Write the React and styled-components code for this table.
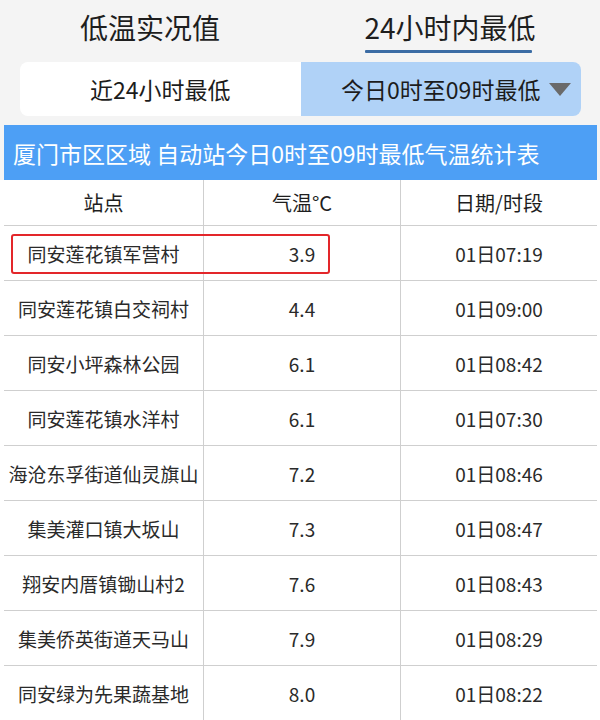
import React from "react";
import styled, { createGlobalStyle } from "styled-components";

const GlobalStyle = createGlobalStyle`
  html, body {
    margin: 0;
    padding: 0;
    background: #f4f4f4;
    font-family: "Noto Sans CJK SC", "Noto Sans", sans-serif;
    color: #222;
  }
`;

const rows = [
  { name: "同安莲花镇军营村", temp: "3.9", time: "01日07:19", marked: true },
  { name: "同安莲花镇白交祠村", temp: "4.4", time: "01日09:00" },
  { name: "同安小坪森林公园", temp: "6.1", time: "01日08:42" },
  { name: "同安莲花镇水洋村", temp: "6.1", time: "01日07:30" },
  { name: "海沧东孚街道仙灵旗山", temp: "7.2", time: "01日08:46" },
  { name: "集美灌口镇大坂山", temp: "7.3", time: "01日08:47" },
  { name: "翔安内厝镇锄山村2", temp: "7.6", time: "01日08:43" },
  { name: "集美侨英街道天马山", temp: "7.9", time: "01日08:29" },
  { name: "同安绿为先果蔬基地", temp: "8.0", time: "01日08:22" },
];

export default function App() {
  return (
    <Page>
      <GlobalStyle />
      <Tabs>
        <Tab>低温实况值</Tab>
        <Tab active>
          24小时内最低
          <Underline />
        </Tab>
      </Tabs>
      <Segment>
        <SegItem>近24小时最低</SegItem>
        <SegItem selected>
          今日0时至09时最低
          <Caret />
        </SegItem>
      </Segment>
      <TitleBar>厦门市区区域 自动站今日0时至09时最低气温统计表</TitleBar>
      <Table>
        <Row head>
          <Cell head>站点</Cell>
          <Cell head>气温°C</Cell>
          <Cell head>日期/时段</Cell>
        </Row>
        {rows.map((r) => (
          <Row key={r.name}>
            <Cell>{r.name}</Cell>
            <Cell>{r.temp}</Cell>
            <Cell>{r.time}</Cell>
            {r.marked && <Marker />}
          </Row>
        ))}
      </Table>
    </Page>
  );
}

const Page = styled.div`
  width: 600px;
  height: 720px;
  overflow: hidden;
  background: #f4f4f4;
`;

const Tabs = styled.div`
  display: grid;
  grid-template-columns: 1fr 1fr;
  height: 62px;
`;

const Tab = styled.div`
  position: relative;
  display: flex;
  justify-content: center;
  padding-top: 7px;
  font-size: 28px;
  line-height: 40px;
  color: #1e1e1e;
`;

const Underline = styled.span`
  position: absolute;
  left: 65px;
  right: 68px;
  top: 50px;
  height: 3px;
  background: #3b6ca4;
  border-radius: 1px;
`;

const Segment = styled.div`
  display: grid;
  grid-template-columns: 1fr 1fr;
  margin: 0 19px 0 20px;
  height: 54px;
  border-radius: 8px;
  overflow: hidden;
`;

const SegItem = styled.div`
  position: relative;
  display: flex;
  align-items: center;
  justify-content: center;
  font-size: 23px;
  color: #1c1c1c;
  background: ${(p) => (p.selected ? "#b0d2f7" : "#ffffff")};
`;

const Caret = styled.span`
  position: absolute;
  right: 10px;
  top: 21px;
  width: 0;
  height: 0;
  border-left: 11px solid transparent;
  border-right: 11px solid transparent;
  border-top: 13px solid #6a6a6a;
`;

const TitleBar = styled.div`
  margin: 9px 3px 0 4px;
  height: 55px;
  display: flex;
  align-items: center;
  padding-left: 9px;
  background: #4d9ff5;
  color: #fff;
  font-size: 23px;
  white-space: nowrap;
`;

const Table = styled.div`
  background: #fff;
  padding: 0 3px 0 4px;
`;

const Row = styled.div`
  position: relative;
  display: grid;
  grid-template-columns: 199px 197px 1fr;
  height: ${(p) => (p.head ? "45px" : "54px")};
  border-bottom: 1.5px solid #cfcfcf;
`;

const Cell = styled.div`
  display: flex;
  align-items: center;
  justify-content: center;
  white-space: nowrap;
  font-size: ${(p) => (p.head ? "20px" : "19px")};
  color: ${(p) => (p.head ? "#1e1e1e" : "#2a2a2a")};
  & + & {
    border-left: 1.5px solid #cfcfcf;
  }
`;

const Marker = styled.span`
  position: absolute;
  left: 7px;
  top: 8px;
  width: 315px;
  height: 36px;
  border: 2px solid #e3262a;
  border-radius: 3px;
  pointer-events: none;
`;
